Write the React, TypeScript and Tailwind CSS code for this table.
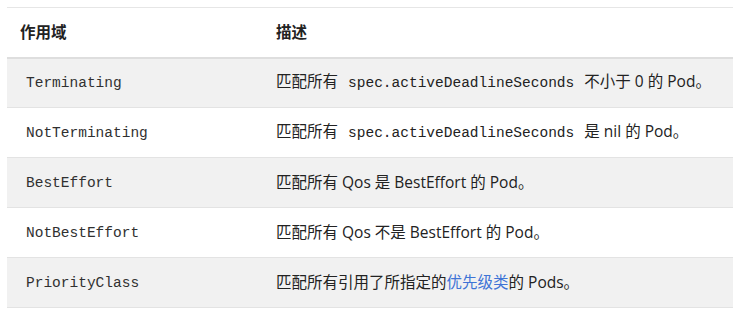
const mono = "font-['Liberation_Mono','DejaVu_Sans_Mono',monospace] text-[14.5px]"

const rows: { scope: string; desc: React.ReactNode }[] = [
  {
    scope: "Terminating",
    desc: (
      <>
        匹配所有 <code className={`px-[6px] ${mono}`}>spec.activeDeadlineSeconds</code> 不小于 0 的 Pod。
      </>
    ),
  },
  {
    scope: "NotTerminating",
    desc: (
      <>
        匹配所有 <code className={`px-[6px] ${mono}`}>spec.activeDeadlineSeconds</code> 是 nil 的 Pod。
      </>
    ),
  },
  { scope: "BestEffort", desc: "匹配所有 Qos 是 BestEffort 的 Pod。" },
  { scope: "NotBestEffort", desc: "匹配所有 Qos 不是 BestEffort 的 Pod。" },
  {
    scope: "PriorityClass",
    desc: (
      <>
        匹配所有引用了所指定的<a className="text-[#3f74d6]">优先级类</a>的 Pods。
      </>
    ),
  },
]

export default function App() {
  return (
    <div className="h-[315px] w-[740px] bg-white px-[7px] pt-[7px] font-['Open_Sans','Noto_Sans_CJK_SC',sans-serif] text-[15.5px] text-[#222]">
      <table className="w-full border-collapse border-t border-[#e6e6e6]">
        <thead>
          <tr className="h-[50px] border-b-2 border-[#dedede]">
            <th className="w-[257px] px-[13px] text-left font-bold">作用域</th>
            <th className="px-[12px] text-left font-bold">描述</th>
          </tr>
        </thead>
        <tbody>
          {rows.map((r, i) => (
            <tr
              key={r.scope}
              className={`h-[50px] border-b border-[#e3e3e3] ${i % 2 === 0 ? "bg-[#f1f1f1]" : "bg-white"}`}
            >
              <td className="px-[13px]">
                <code className={`px-[6px] text-[#303030] ${mono}`}>{r.scope}</code>
              </td>
              <td className="px-[12px]">{r.desc}</td>
            </tr>
          ))}
        </tbody>
      </table>
    </div>
  )
}
